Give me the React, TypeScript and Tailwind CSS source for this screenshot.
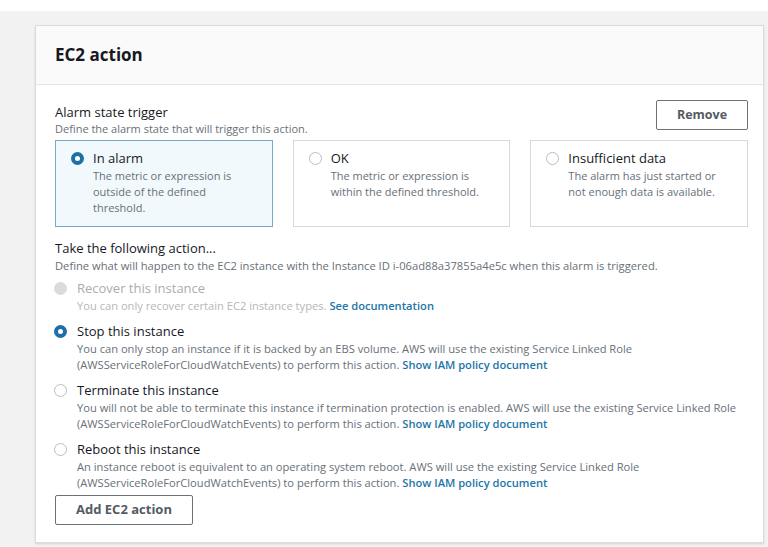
import React from "react";

const font = { fontFamily: '"Open Sans", "Noto Sans", sans-serif' };

function Radio({ state }: { state: "on" | "off" | "disabled" }) {
  if (state === "on")
    return <span className="block w-[13px] h-[13px] rounded-full border-[4px] border-[#1f6fa6] bg-white shrink-0" />;
  if (state === "disabled")
    return <span className="block w-[13px] h-[13px] rounded-full bg-[#d9dcdd] shrink-0" />;
  return <span className="block w-[13px] h-[13px] rounded-full border border-[#b7bdc0] bg-white shrink-0" />;
}

function Tile({ on, title, desc }: { on?: boolean; title: string; desc: string }) {
  return (
    <div
      className={
        "flex-1 h-[87px] border pl-[15px] pr-3 pt-[7px] flex gap-[9px] " +
        (on ? "border-[#74acc8] bg-[#f1f9fd]" : "border-[#d5d9da] bg-white")
      }
    >
      <div className="h-[20px] flex items-center">
        <Radio state={on ? "on" : "off"} />
      </div>
      <div>
        <div className="text-[13px] leading-[20px] text-[#16191f]">{title}</div>
        <div className="text-[11px] leading-[16px] text-[#687078] w-[162px]">{desc}</div>
      </div>
    </div>
  );
}

function Action({
  state,
  title,
  lines,
  link,
}: {
  state: "on" | "off" | "disabled";
  title: string;
  lines: string[];
  link: string;
}) {
  const dis = state === "disabled";
  return (
    <div className="flex gap-[10px] -ml-[1px]">
      <div className="h-[20px] flex items-center">
        <Radio state={state} />
      </div>
      <div>
        <div className={"text-[13px] leading-[20px] " + (dis ? "text-[#a9adb0]" : "text-[#16191f]")}>{title}</div>
        {lines.map((l, i) => (
          <div
            key={i}
            className={"text-[11.15px] leading-[16px] whitespace-nowrap " + (dis ? "text-[#b3b7ba]" : "text-[#687078]")}
          >
            {l}
            {i === lines.length - 1 && <span className="text-[#2276a8] font-semibold"> {link}</span>}
          </div>
        ))}
      </div>
    </div>
  );
}

export default function App() {
  return (
    <div className="w-[768px] h-[547px] bg-white overflow-hidden" style={font}>
      <div className="mt-[11px] h-[536px] bg-[#f2f2f2] pl-[35px] pr-[4px] pt-[14px]">
        <div className="bg-white border border-[#dcdcdc] shadow-[0_1px_2px_rgba(0,0,0,0.12)] h-[518px]">
          <div className="h-[59px] bg-[#fafafa] border-b border-[#e4e4e4] flex items-center pl-[19px]">
            <h1 className="text-[17px] font-bold text-[#16191f]">EC2 action</h1>
          </div>
          <div className="pl-[19px] pr-[15px] pt-[15px]">
            <div className="flex justify-between items-start">
              <div className="pt-[3px]">
                <div className="text-[13px] leading-[18px] text-[#16191f]">Alarm state trigger</div>
                <div className="text-[11px] leading-[15px] text-[#687078]">
                  Define the alarm state that will trigger this action.
                </div>
              </div>
              <button className="w-[92px] h-[30px] border border-[#6b7277] rounded-[2px] text-[12.5px] font-bold text-[#545b64]">
                Remove
              </button>
            </div>
            <div className="flex gap-[20px] mt-[4px]">
              <Tile on title="In alarm" desc="The metric or expression is outside of the defined threshold." />
              <Tile title="OK" desc="The metric or expression is within the defined threshold." />
              <Tile title="Insufficient data" desc="The alarm has just started or not enough data is available." />
            </div>
            <div className="mt-[11px] text-[13px] leading-[20px] text-[#16191f]">Take the following action...</div>
            <div className="text-[11.2px] leading-[16px] text-[#687078] whitespace-nowrap">
              Define what will happen to the EC2 instance with the Instance ID i-06ad88a37855a4e5c when this alarm is
              triggered.
            </div>
            <div className="mt-[4px] flex flex-col gap-[7px]">
              <Action
                state="disabled"
                title="Recover this instance"
                lines={["You can only recover certain EC2 instance types."]}
                link="See documentation"
              />
              <Action
                state="on"
                title="Stop this instance"
                lines={[
                  "You can only stop an instance if it is backed by an EBS volume. AWS will use the existing Service Linked Role",
                  "(AWSServiceRoleForCloudWatchEvents) to perform this action.",
                ]}
                link="Show IAM policy document"
              />
              <Action
                state="off"
                title="Terminate this instance"
                lines={[
                  "You will not be able to terminate this instance if termination protection is enabled. AWS will use the existing Service Linked Role",
                  "(AWSServiceRoleForCloudWatchEvents) to perform this action.",
                ]}
                link="Show IAM policy document"
              />
              <Action
                state="off"
                title="Reboot this instance"
                lines={[
                  "An instance reboot is equivalent to an operating system reboot. AWS will use the existing Service Linked Role",
                  "(AWSServiceRoleForCloudWatchEvents) to perform this action.",
                ]}
                link="Show IAM policy document"
              />
            </div>
            <button className="mt-[4px] w-[138px] h-[30px] border border-[#6b7277] rounded-[2px] text-[13px] font-bold text-[#545b64]">
              Add EC2 action
            </button>
          </div>
        </div>
      </div>
    </div>
  );
}
